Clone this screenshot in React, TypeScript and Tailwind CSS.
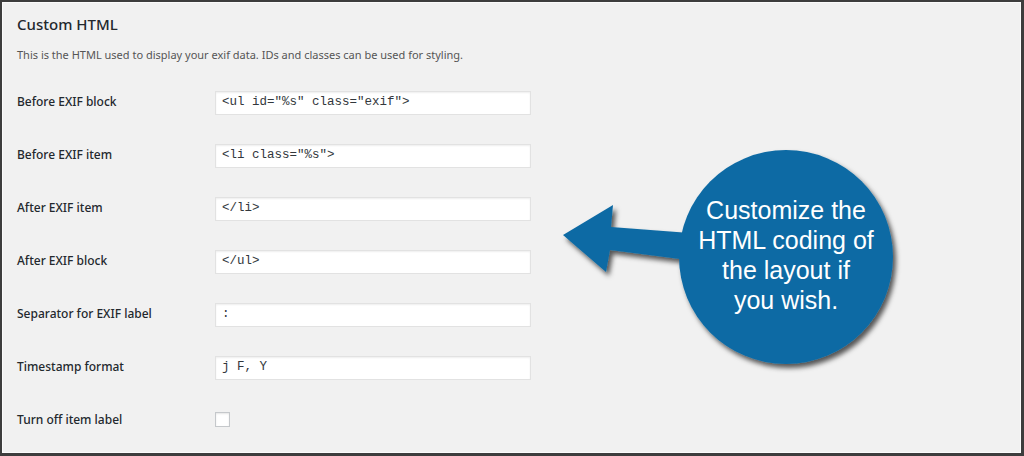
const rows = [
  { label: "Before EXIF block", value: '<ul id="%s" class="exif">' },
  { label: "Before EXIF item", value: '<li class="%s">' },
  { label: "After EXIF item", value: "</li>" },
  { label: "After EXIF block", value: "</ul>" },
  { label: "Separator for EXIF label", value: ":" },
  { label: "Timestamp format", value: "j F, Y" },
];

function Callout() {
  return (
    <div className="absolute left-[550px] top-[137px] w-[360px] h-[240px]">
      <svg width="360" height="240" viewBox="0 0 360 240" className="absolute inset-0">
        <defs>
          <filter id="callout-shadow" x="-20%" y="-20%" width="140%" height="140%">
            <feDropShadow dx="3" dy="4" stdDeviation="2.5" floodColor="#000" floodOpacity="0.65" />
          </filter>
        </defs>
        <g filter="url(#callout-shadow)" fill="#0e6ba4">
          <polygon points="10,95 60,65 58,87 150,94 150,122 57,110 53,132" />
          <circle cx="233" cy="117" r="107" />
        </g>
      </svg>
      <div className="absolute left-[133px] top-[55px] w-[200px] h-[120px] flex items-center justify-center text-center text-white text-[25px] leading-[30px] font-['Liberation_Sans',Arial,sans-serif]">
        <p>
          Customize the
          <br />
          HTML coding of
          <br />
          the layout if
          <br />
          you wish.
        </p>
      </div>
    </div>
  );
}

export default function App() {
  return (
    <div className="w-[1024px] h-[456px] border-t-2 border-l-2 border-r-[3px] border-b-[3px] border-[#3d3d3d] bg-[#f1f1f1] font-['Noto_Sans',sans-serif] text-[#23282d]">
      <div className="relative h-full border border-[#fbfbfb] px-[14px] pt-[11px]">
        <h2 className="text-[15px] leading-[20px] font-medium">Custom HTML</h2>
        <p className="mt-[12px] text-[11px] leading-[18px] text-[#555]">
          This is the HTML used to display your exif data. IDs and classes can be used for styling.
        </p>
        <div className="mt-[12px] flex flex-col">
          {rows.map((row) => (
            <div key={row.label} className="flex items-center h-[53px]">
              <label className="w-[198px] text-[12px] font-medium leading-[18px] -mt-[2px]">
                {row.label}
              </label>
              <div className="w-[316px] h-[24px] flex items-center px-[6px] bg-white border border-[#e2e2e2] shadow-[inset_0_1px_2px_rgba(0,0,0,0.07)] font-['Liberation_Mono',monospace] text-[12.5px] text-[#32373c] whitespace-pre">
                {row.value}
              </div>
            </div>
          ))}
          <div className="flex items-center h-[53px]">
            <label className="w-[198px] text-[12px] font-medium leading-[18px] -mt-[2px]">
              Turn off item label
            </label>
            <span className="block w-[15px] h-[15px] -mt-[2px] bg-white border border-[#c5c8cb] shadow-[inset_0_1px_2px_rgba(0,0,0,0.1)]" />
          </div>
        </div>
        <Callout />
      </div>
    </div>
  );
}
